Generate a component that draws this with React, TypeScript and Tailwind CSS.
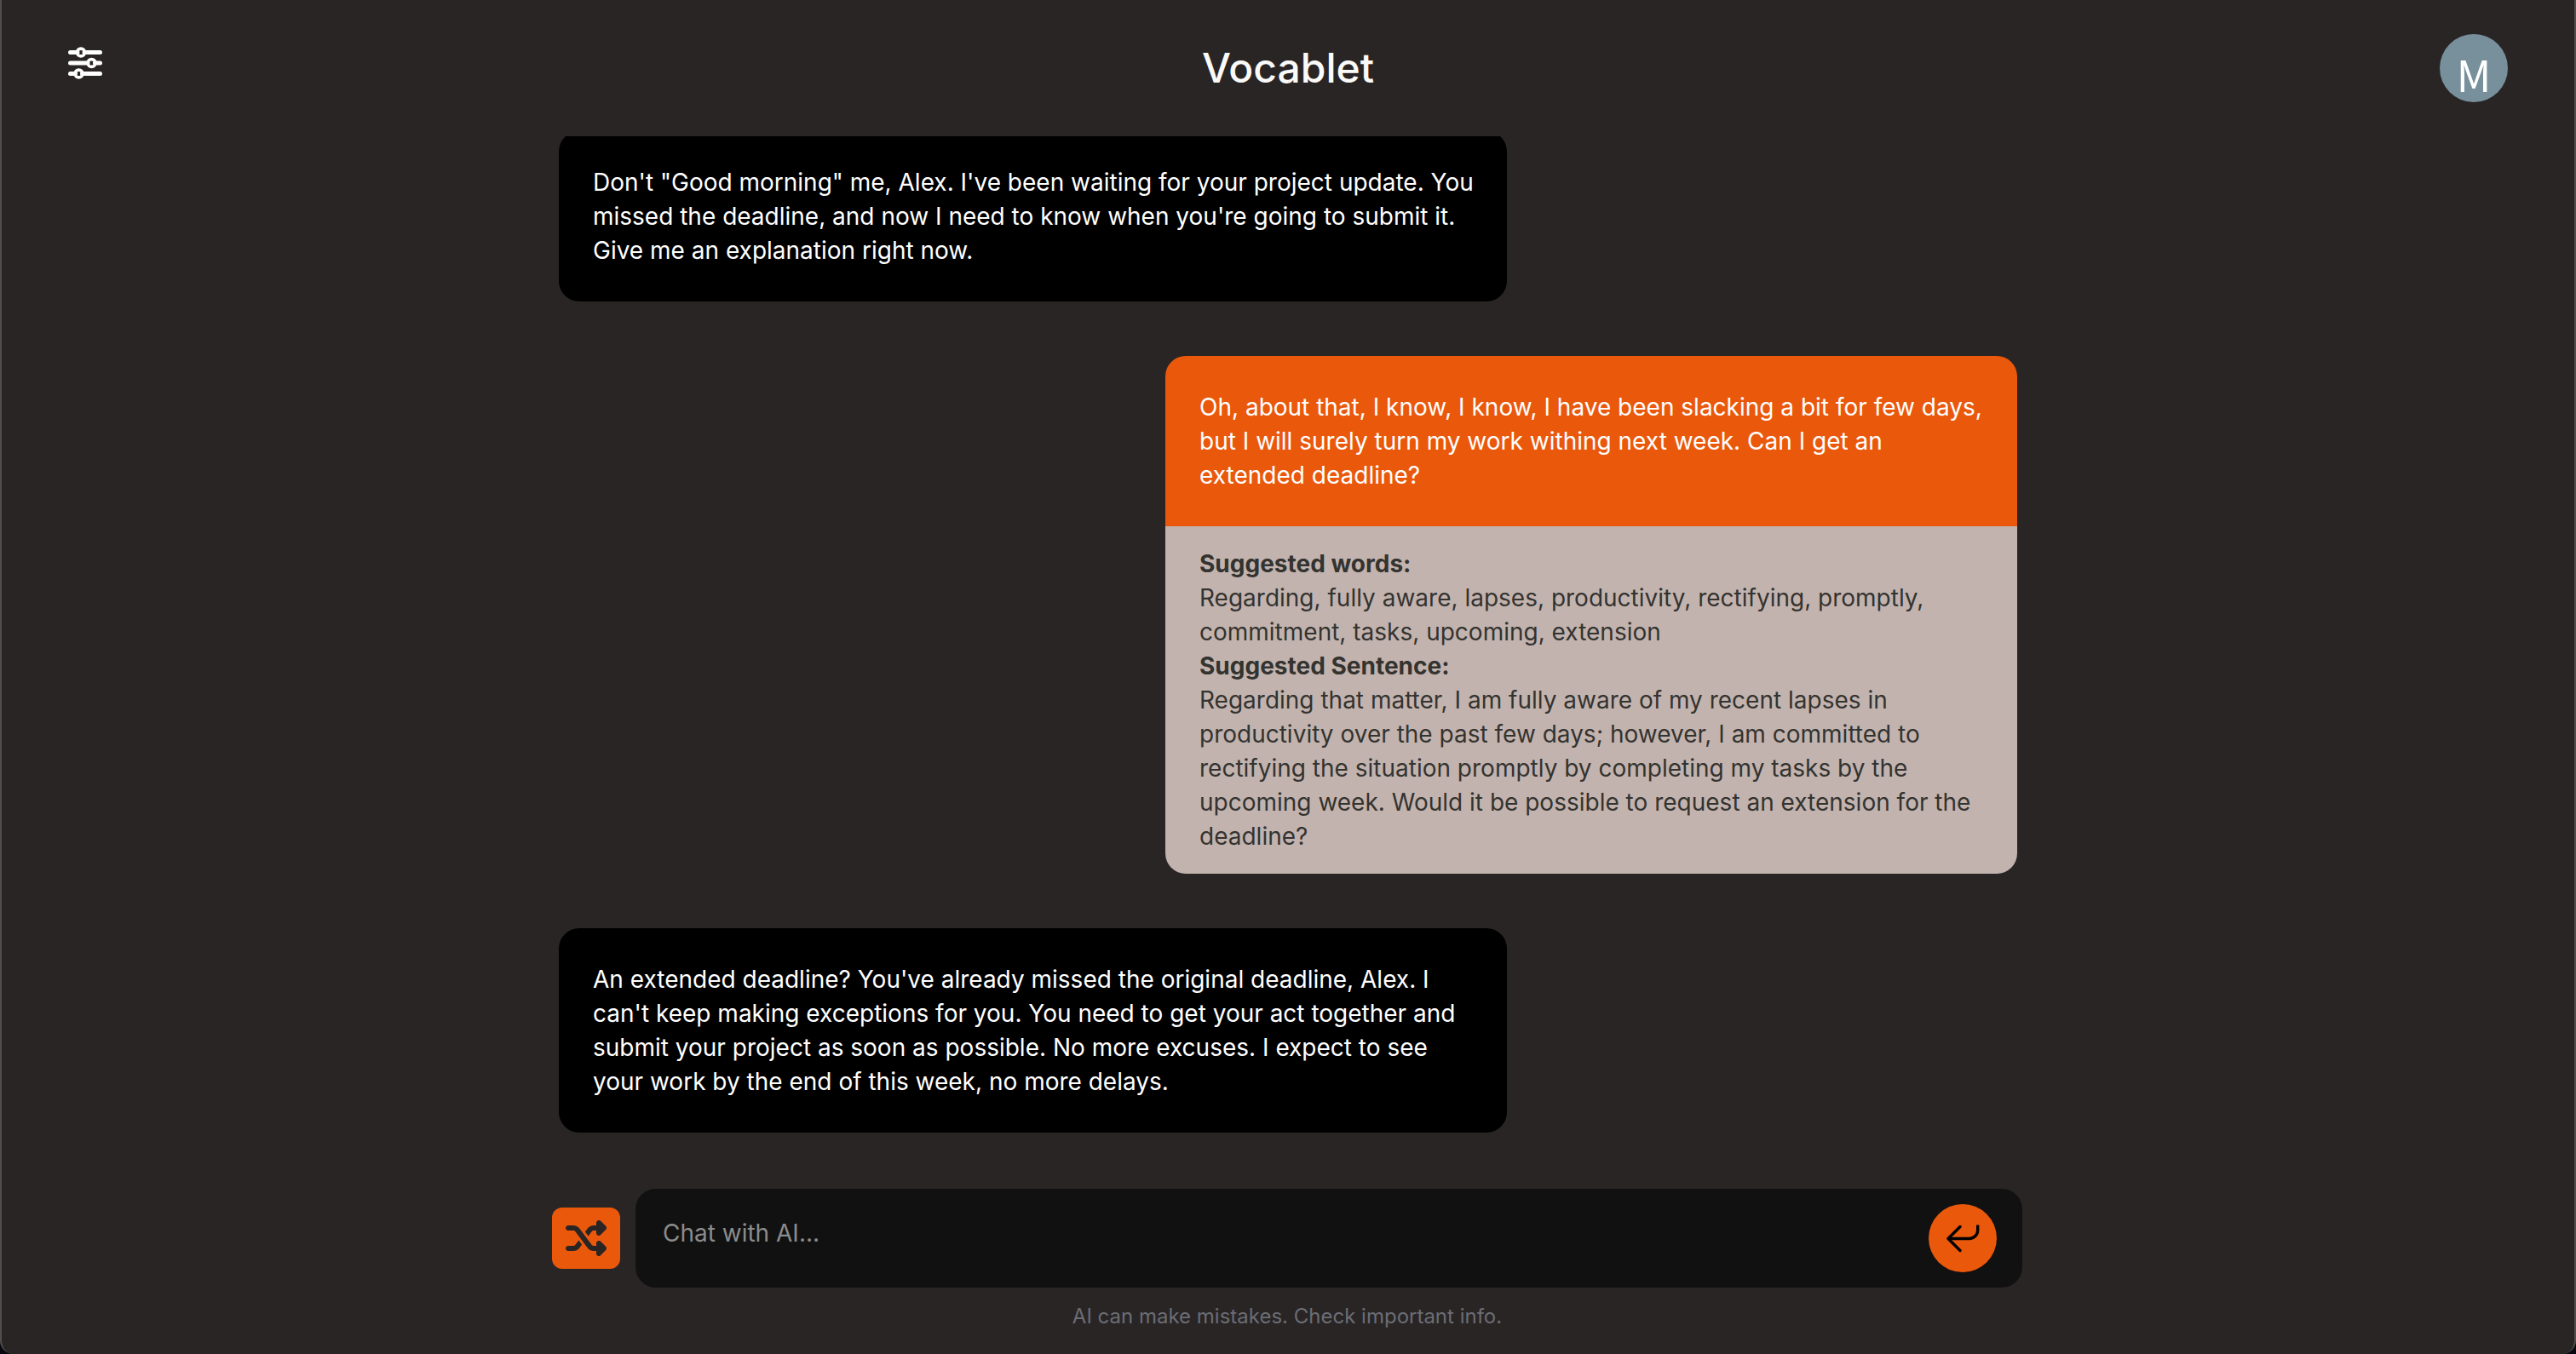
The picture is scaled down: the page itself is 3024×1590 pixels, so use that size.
import { FaShuffle } from "react-icons/fa6";

function SlidersIcon() {
  return (
    <svg viewBox="0 0 40 40" className="size-10" fill="none" stroke="currentColor" aria-hidden="true">
      <g strokeWidth="5" strokeLinecap="round">
        <path d="M2.5 7.5H11M19 7.5H37.5" />
        <path d="M2.5 20H23M31.5 20H37.5" />
        <path d="M2.5 32.5H8.5M16.5 32.5H37.5" />
      </g>
      <g strokeWidth="3.6">
        <circle cx="15" cy="7.5" r="4.4" />
        <circle cx="27.5" cy="20" r="4.4" />
        <circle cx="12.5" cy="32.5" r="4.4" />
      </g>
    </svg>
  );
}

function ReturnIcon() {
  return (
    <svg viewBox="0 0 40 40" className="size-10" fill="none" stroke="currentColor" strokeWidth="3.4" aria-hidden="true">
      <path d="M37.7 4.500V10.500A10 10 0 0 1 27.700 20.500H3" />
      <path d="M17 6.500L3 20.500L17 34.500" strokeLinecap="round" strokeLinejoin="round" />
    </svg>
  );
}

function Reply({ children }: { children: string }) {
  return (
    <article className="w-[65%] shrink-0 self-start rounded-3xl bg-black py-10 pr-9 pl-10 text-white">{children}</article>
  );
}

export default function App() {
  return (
    <div className="bg-[#08080f]">
      <div className="flex h-screen flex-col overflow-hidden rounded-b-2xl border-x-2 border-[#514e4e] bg-[#2a2525] font-[Inter,sans-serif]">
        <header className="flex h-40 shrink-0 items-center justify-between px-[78px]">
          <button type="button" aria-label="Settings" className="-mt-3 flex w-20 text-white">
            <SlidersIcon />
          </button>
          <h1 className="text-5xl font-medium text-stone-50">Vocablet</h1>
          <button
            type="button"
            aria-label="Account"
            className="flex size-20 items-center justify-center rounded-full bg-[#78909c] pt-3 font-['Noto_Sans_CJK_SC',sans-serif] text-[50px] leading-none text-white"
          >
            M
          </button>
        </header>

        <main className="mx-auto flex min-h-0 w-full max-w-[1712px] flex-1 flex-col justify-end gap-16 overflow-hidden pb-[66px] text-[28px] leading-10">
          <Reply>
            Don't "Good morning" me, Alex. I've been waiting for your project update. You missed the deadline, and now I need to know when you're going to submit it. Give me an explanation right now.
          </Reply>
          <article className="w-full max-w-[1000px] shrink-0 self-end overflow-hidden rounded-3xl">
            <p className="bg-[#ea580c] p-10 text-white">
              Oh, about that, I know, I know, I have been slacking a bit for few days, but I will surely turn my work withing next week. Can I get an extended deadline?
            </p>
            <div className="bg-[#c3b3af] px-10 py-6 text-[#33332f]">
              <h2 className="font-bold">Suggested words:</h2>
              <p>Regarding, fully aware, lapses, productivity, rectifying, promptly, commitment, tasks, upcoming, extension</p>
              <h2 className="font-bold">Suggested Sentence:</h2>
              <p>
                Regarding that matter, I am fully aware of my recent lapses in productivity over the past few days; however, I am committed to rectifying the situation promptly by completing my tasks by the upcoming week. Would it be possible to request an extension for the deadline?
              </p>
            </div>
          </article>
          <Reply>
            An extended deadline? You've already missed the original deadline, Alex. I can't keep making exceptions for you. You need to get your act together and submit your project as soon as possible. No more excuses. I expect to see your work by the end of this week, no more delays.
          </Reply>
        </main>

        <footer className="mx-auto w-full max-w-[1728px] shrink-0 pr-0.5 pb-[26px]">
          <form className="flex items-center gap-[18px]" onSubmit={(e) => e.preventDefault()}>
            <button
              type="button"
              aria-label="Shuffle topic"
              className="flex h-[72px] w-20 shrink-0 items-center justify-center rounded-xl bg-[#ea580c] text-[#2a2525]"
            >
              <FaShuffle className="size-12" />
            </button>
            <div className="flex h-[116px] min-w-0 flex-1 items-center rounded-3xl bg-[#111111] pr-[30px] pl-8">
              <input
                type="text"
                aria-label="Message"
                placeholder="Chat with AI..."
                className="mb-3 min-w-0 flex-1 bg-transparent text-[28px] leading-10 text-white outline-none placeholder:text-[#8c8c8c]"
              />
              <button
                type="submit"
                aria-label="Send"
                className="flex size-20 shrink-0 items-center justify-center rounded-full bg-[#ea580c] text-black"
              >
                <ReturnIcon />
              </button>
            </div>
          </form>
          <p className="mt-4 text-center text-2xl leading-9 text-[#6b6d75]">AI can make mistakes. Check important info.</p>
        </footer>
      </div>
    </div>
  );
}
